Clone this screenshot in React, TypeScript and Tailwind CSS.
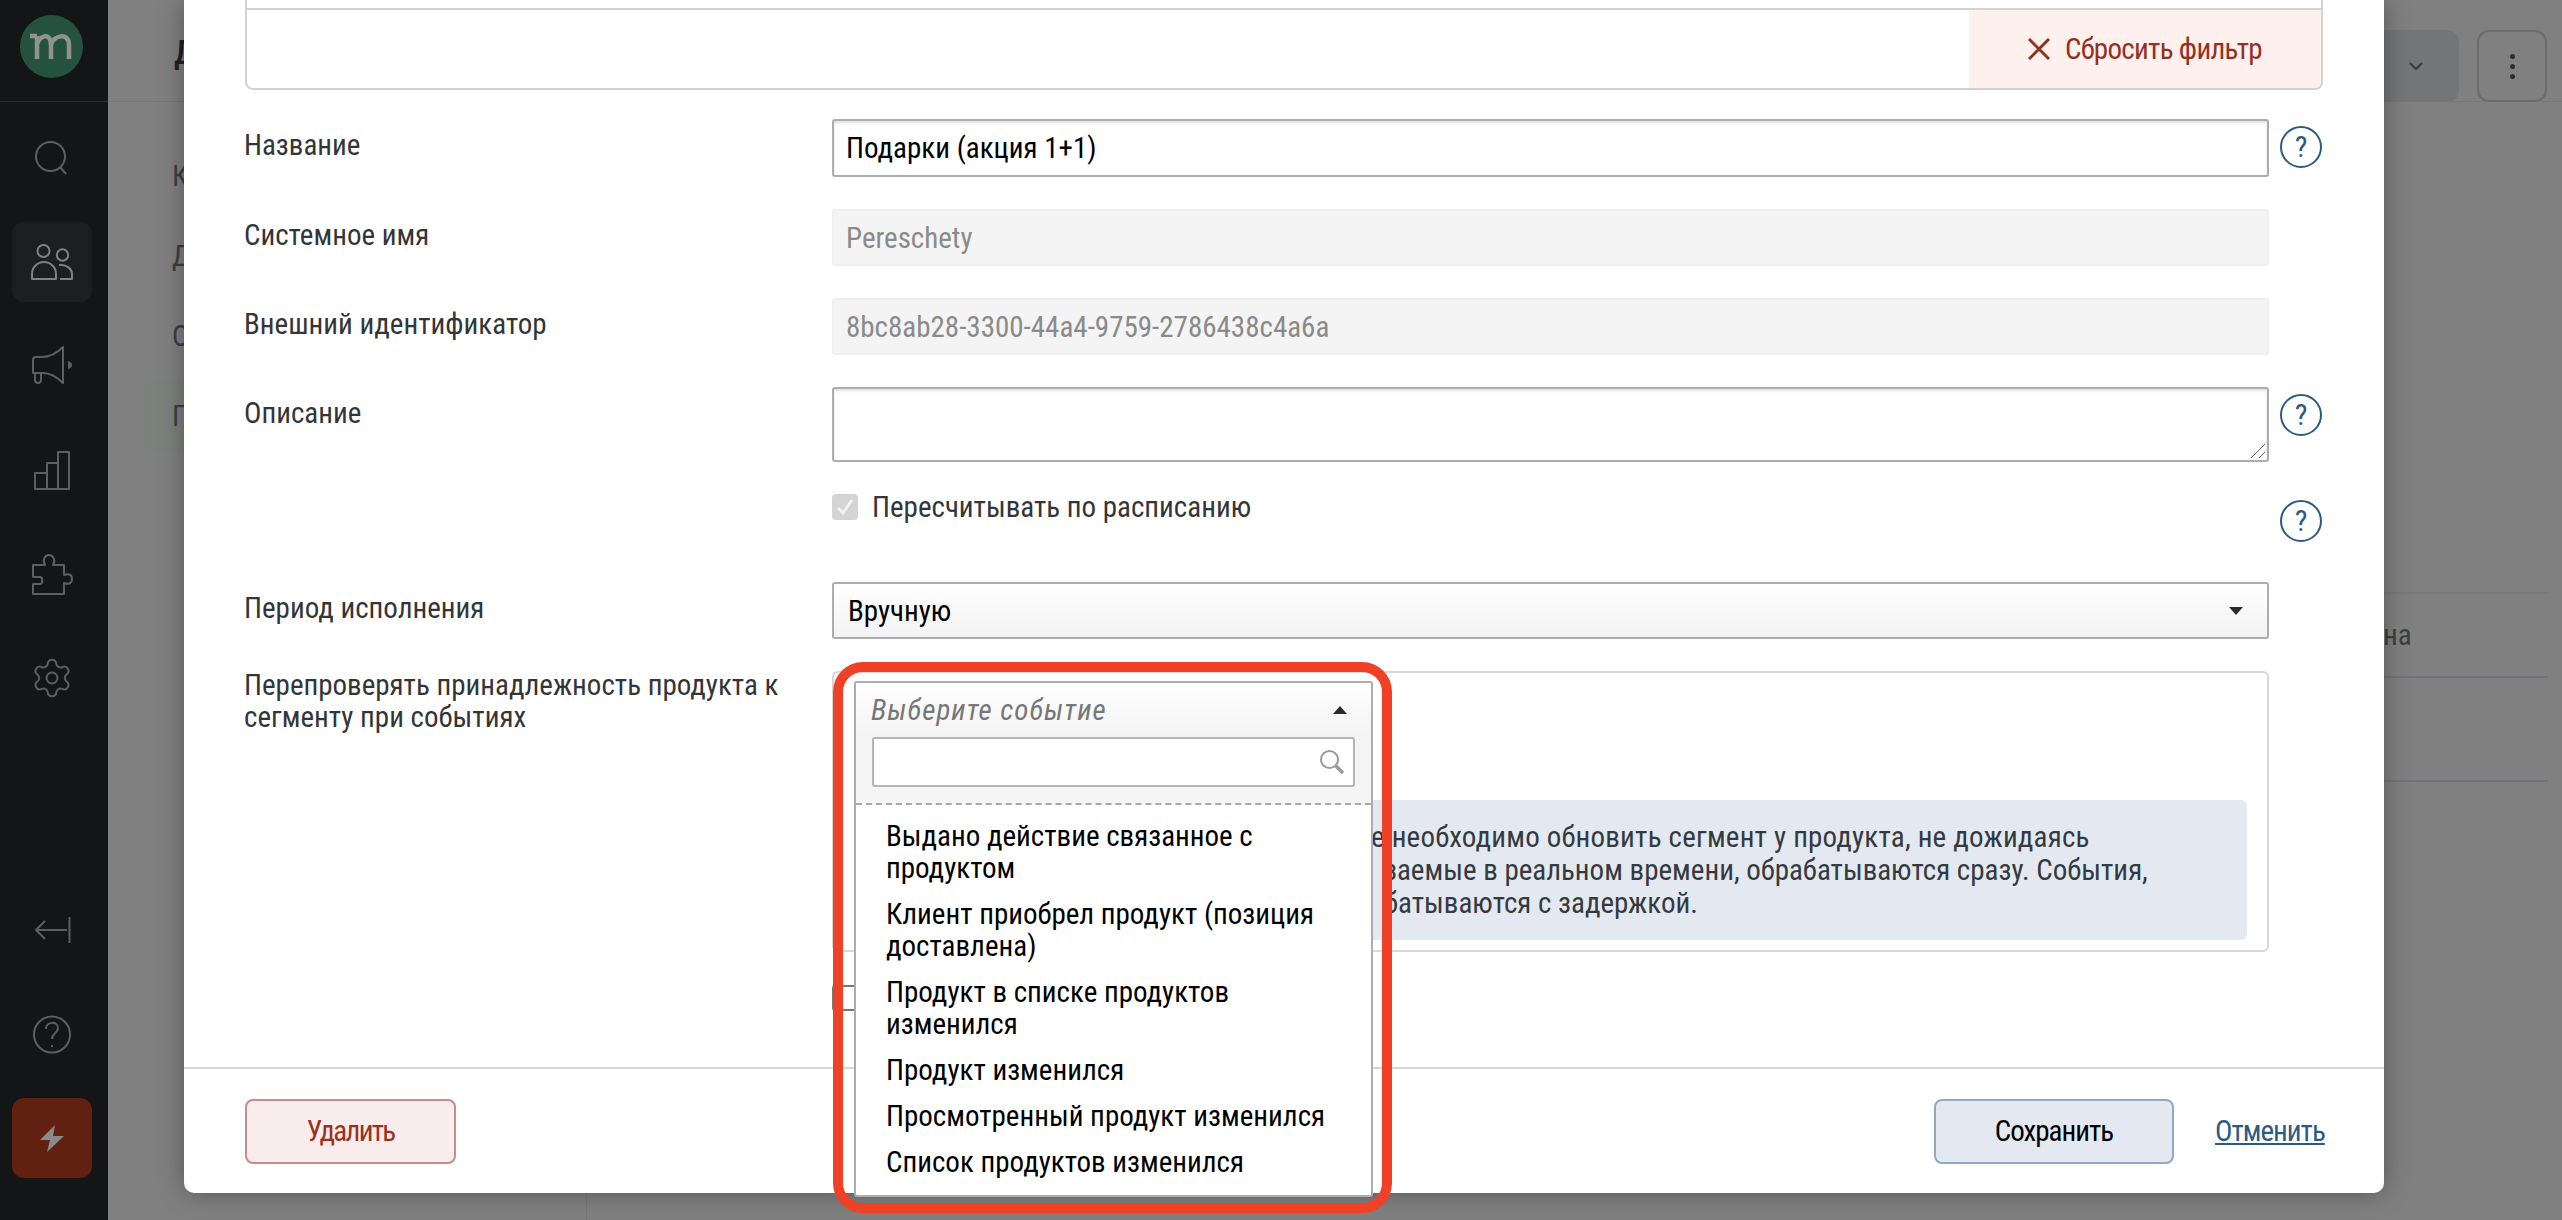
import { Settings } from "lucide-react";

const ico = "fill-none stroke-current stroke-[2]";

function Help() {
  return (
    <div className="flex h-[42px] w-[42px] shrink-0 items-center justify-center rounded-full border-2 border-[#2d5a85] text-[30px] leading-none text-[#2d5a85]">?</div>
  );
}

function Row({ label, children, help, helpClass }: { label: string; children: React.ReactNode; help?: boolean; helpClass?: string }) {
  return (
    <div className="flex items-start">
      <div className="-ml-[1px] w-[588px] shrink-0 pt-[10px] text-[#333538]">{label}</div>
      <div className="w-[1437px] shrink-0">{children}</div>
      {help && <div className={`ml-[11px] ${helpClass}`}><Help /></div>}
    </div>
  );
}

function NavIcon({ children, active }: { children: React.ReactNode; active?: boolean }) {
  return (
    <div className={`flex h-[80px] w-[80px] items-center justify-center rounded-[12px] ${active ? "bg-[#1c1e21] text-[#7f8183]" : "text-[#5c5e60]"}`}>
      {children}
    </div>
  );
}

const events = [
  "Выдано действие связанное с продуктом",
  "Клиент приобрел продукт (позиция доставлена)",
  "Продукт в списке продуктов изменился",
  "Продукт изменился",
  "Просмотренный продукт изменился",
  "Список продуктов изменился",
];

export default function App() {
  return (
    <div className="relative flex h-[1220px] w-[2562px] overflow-hidden bg-[#808080] font-['Roboto_Condensed','Roboto',sans-serif] text-[29px] leading-[32px]">
      {/* Sidebar */}
      <aside className="flex w-[108px] shrink-0 flex-col items-center bg-[#131517] pb-[42px] pr-[4px]">
        <div className="-mr-[4px] flex h-[102px] w-[108px] shrink-0 items-center justify-center border-b border-[#2a2d30] pb-[9px] pr-[6px]">
          <svg width="63" height="63" viewBox="0 0 63 63">
            <circle cx="31.5" cy="31.5" r="31.5" fill="#24523f" />
            <path d="M10 21h7M17 44V21M17 30C18 21 31 16 31 30V44M31 30C32 21 49 16 49 30V44" fill="none" stroke="#8f9492" strokeWidth="4.5" />
          </svg>
        </div>
        <div className="mt-[16px] flex flex-col gap-[24px]">
          <NavIcon>
            <svg width="34" height="34" viewBox="0 0 34 34" className={ico}><circle cx="15.5" cy="15.5" r="14.5" /><path d="M25 26l6 7" /></svg>
          </NavIcon>
          <NavIcon active>
            <svg width="43" height="37" viewBox="0 0 43 37" className={ico}><circle cx="12.5" cy="7" r="6" /><circle cx="31.5" cy="11" r="5.7" /><path d="M1 35v-5a12 12 0 0 1 24 0v5z" strokeLinejoin="round" /><path d="M28 21h2a11 9 0 0 1 11 9v5H29" strokeLinejoin="round" /></svg>
          </NavIcon>
          <NavIcon>
            <svg width="42" height="40" viewBox="0 0 42 40" className={ico}><path d="M2 27V14a3 3 0 0 1 3-3h6c8 0 15-4 21-10v36c-6-6-12-10-20-10z" strokeLinejoin="round" /><path d="M4 27v7a3 3 0 0 0 6 0v-7" /><path d="M37 15c3 1 4 2 4 4s-1 3-4 4z" fill="currentColor" stroke="none" /></svg>
          </NavIcon>
          <NavIcon>
            <svg width="38" height="40" viewBox="0 0 38 40" className={ico}><path d="M2 39V23h12v16zM14 39V13h11v26zM25 39V2h11v37z" strokeLinejoin="round" /></svg>
          </NavIcon>
          <NavIcon>
            <svg width="42" height="43" viewBox="0 0 42 43" className={ico}><path d="M2 12h12c-3-5 0-10 4-10s7 5 4 10h11v10c5-2 8 0 8 4s-3 6-8 4v11H2V31h7c3 0 3-7 0-7H2z" strokeLinejoin="round" /></svg>
          </NavIcon>
          <NavIcon>
            <Settings size={44} strokeWidth={1.1} />
          </NavIcon>
        </div>
        <div className="mt-auto flex flex-col gap-[24px]">
          <NavIcon>
            <svg width="37" height="28" viewBox="0 0 37 28" className={ico}><path d="M35.5 1v26M33 14H2M11 5l-9 9 9 9" /></svg>
          </NavIcon>
          <NavIcon>
            <svg width="38" height="39" viewBox="0 0 38 39" className={ico}><circle cx="19" cy="19.5" r="18" /><path d="M13 14c0-8 12-8 12-1 0 5-6 5-6 11" /><path d="M19 30v2" /></svg>
          </NavIcon>
          <div className="flex h-[80px] w-[80px] items-center justify-center rounded-[12px] bg-[#622010]">
            <svg width="24" height="27" viewBox="0 0 24 27"><path d="M15 0L0 15h10L7 27l17-16H13z" fill="#8a8a8a" /></svg>
          </div>
        </div>
      </aside>

      {/* Page behind the dialog */}
      <main className="flex min-w-0 flex-1 flex-col">
        <div className="flex h-[102px] shrink-0 items-start justify-between border-b border-[#75787c] pl-[66px] pr-[15px] pt-[30px]">
          <div className="pt-[6px] text-[34px] font-medium text-[#222]">Д</div>
          <div className="flex gap-[18px]">
            <div className="flex h-[72px] w-[200px] items-center justify-end rounded-[12px] bg-[#747577] pr-[36px] text-[#3a3c3e]">
              <svg width="14" height="9" viewBox="0 0 14 9" className={ico}><path d="M1 1l6 6 6-6" /></svg>
            </div>
            <div className="flex h-[72px] w-[70px] flex-col items-center justify-center gap-[5px] rounded-[12px] border-2 border-[#686c70]">
              <span className="h-[5px] w-[5px] rounded-full bg-[#2c2e30]" />
              <span className="h-[5px] w-[5px] rounded-full bg-[#2c2e30]" />
              <span className="h-[5px] w-[5px] rounded-full bg-[#2c2e30]" />
            </div>
          </div>
        </div>
        <div className="flex min-h-0 flex-1">
          <nav className="flex w-[479px] shrink-0 flex-col border-r border-[#75787c] pl-[36px] pt-[58px] text-[#3c3e40]">
            <div className="h-[80px] pl-[28px]">К</div>
            <div className="h-[80px] pl-[28px]">Д</div>
            <div className="h-[60px] pl-[28px]">О</div>
            <div className="flex h-[72px] items-center rounded-[10px] bg-[#7b817d] pl-[28px]">П</div>
          </nav>
          <div className="flex flex-1 flex-col items-end pr-[14px] pt-[490px] text-[#3c3e40]">
            <div className="h-[84px] w-[165px] border-t-2 border-[#75787c] pt-[25px]">на</div>
            <div className="h-[106px] w-[165px] border-y-2 border-[#6f7278]" />
          </div>
        </div>
      </main>

      {/* Dialog */}
      <div className="absolute left-[184px] top-0 flex h-[1193px] w-[2200px] flex-col rounded-b-[10px] bg-white shadow-[0_0_24px_rgba(0,0,0,0.35)]">
        <div className="flex-1 px-[61px]">
          <div className="-mt-[20px] h-[110px] w-[2078px] overflow-hidden rounded-b-[8px] border-2 border-[#d2d2d2]">
            <div className="h-[28px] border-b-2 border-[#d2d2d2]" />
            <div className="flex h-[78px] justify-end">
              <div className="flex h-full w-[352px] items-center justify-center gap-[15px] bg-[#fdf0ed] tracking-[-0.7px] text-[#93301f]">
                <svg width="22" height="22" viewBox="0 0 22 22" className="fill-none stroke-current stroke-[3]"><path d="M1 1l20 20M21 1L1 21" /></svg>
                <span>Сбросить фильтр</span>
              </div>
            </div>
          </div>

          <div className="mt-[29px] flex flex-col gap-[32px]">
            <Row label="Название" help helpClass="mt-[7px]">
              <div className="flex h-[58px] items-center rounded-[3px] border-2 border-[#adadb0] px-[12px] text-black shadow-[inset_0_2px_3px_rgba(0,0,0,0.12)]">Подарки (акция 1+1)</div>
            </Row>
            <Row label="Системное имя">
              <div className="flex h-[57px] items-center rounded-[3px] border-2 border-[#efefef] bg-[#f4f4f4] px-[12px] text-[#8a8a8a]">Pereschety</div>
            </Row>
            <Row label="Внешний идентификатор">
              <div className="flex h-[57px] items-center rounded-[3px] border-2 border-[#efefef] bg-[#f4f4f4] px-[12px] text-[#8a8a8a]">8bc8ab28-3300-44a4-9759-2786438c4a6a</div>
            </Row>
            <Row label="Описание" help helpClass="mt-[7px]">
              <div className="relative h-[75px] rounded-[3px] border-2 border-[#adadb0] shadow-[inset_0_2px_3px_rgba(0,0,0,0.12)]">
                <svg width="16" height="16" viewBox="0 0 16 16" className="absolute bottom-[1px] right-[1px] fill-none stroke-[#666] stroke-[1]"><path d="M1 15L15 1M9 15l6-6" /></svg>
              </div>
            </Row>
            <Row label="" help helpClass="mt-[6px]">
              <div className="flex h-[26px] items-center gap-[14px] text-[#333538]">
                <span className="flex h-[26px] w-[26px] items-center justify-center rounded-[4px] bg-[#d4d4d4]">
                  <svg width="18" height="18" viewBox="0 0 18 18" className="fill-none stroke-[#f2f2f2] stroke-[3]"><path d="M2 10l5 5 9-13" /></svg>
                </span>
                <span>Пересчитывать по расписанию</span>
              </div>
            </Row>
            <div className="mt-[8px]">
              <Row label="Период исполнения">
                <div className="flex h-[57px] items-center justify-between rounded-[3px] border-2 border-[#adadb0] bg-gradient-to-b from-white to-[#f3f3f3] pl-[14px] pr-[24px] text-black">
                  <span>Вручную</span>
                  <span className="h-0 w-0 border-x-[7px] border-t-[8px] border-x-transparent border-t-[#2b2b2b]" />
                </div>
              </Row>
            </div>
            <div className="relative">
              <Row label="">
                <div className="flex h-[281px] flex-col justify-end rounded-[6px] border-2 border-[#d8d8d8] px-[20px] pb-[10px]">
                  <div className="flex h-[140px] flex-col justify-center rounded-[6px] bg-[#e4e8f0] pl-[28px] leading-[33px] text-[#333a40]">
                    <div className="whitespace-nowrap pl-[489px] tracking-[0.2px]">е необходимо обновить сегмент у продукта, не дожидаясь</div>
                    <div className="whitespace-nowrap pl-[502px]">заемые в реальном времени, обрабатываются сразу. События,</div>
                    <div className="whitespace-nowrap pl-[502px]">батываются с задержкой.</div>
                  </div>
                </div>
                <div className="mt-[33px] h-[26px] w-[26px] rounded-[3px] border-2 border-[#777]" />
              </Row>
              <div className="absolute -left-[1px] top-[-2px] w-[560px] text-[#333538]">Перепроверять принадлежность продукта к сегменту при событиях</div>
            </div>
          </div>
        </div>

        <div className="flex h-[126px] shrink-0 items-center justify-between border-t-2 border-[#d6d6d6] px-[61px]">
          <button className="h-[65px] w-[211px] rounded-[8px] border-2 border-[#c98a8a] bg-[#f9ecec] tracking-[-1.7px] text-[#9c3020]">Удалить</button>
          <div className="flex items-center gap-[41px]">
            <button className="h-[65px] w-[240px] rounded-[8px] border-2 border-[#8eaac4] bg-[#e4e8f0] tracking-[-1px] text-black">Сохранить</button>
            <a className="w-[108px] whitespace-nowrap tracking-[-1px] text-[#2d5a85] underline">Отменить</a>
          </div>
        </div>
      </div>

      {/* Open event dropdown */}
      <div className="absolute left-[854px] top-[681px] flex h-[516px] w-[519px] flex-col rounded-[3px] border-2 border-[#adadb0] bg-white">
        <div className="flex h-[54px] shrink-0 items-center justify-between bg-gradient-to-b from-white to-[#f3f3f3] pl-[15px] pr-[24px]">
          <span className="italic tracking-[1px] text-[#777]">Выберите событие</span>
          <span className="h-0 w-0 border-x-[7px] border-b-[8px] border-x-transparent border-b-[#2b2b2b]" />
        </div>
        <div className="h-[68px] shrink-0 border-b-2 border-dashed border-[#a8a8a8] bg-[#f5f5f5] px-[16px]">
          <div className="flex h-[50px] items-center justify-end rounded-[3px] border-2 border-[#b5b5b8] bg-white pr-[8px]">
            <svg width="26" height="26" viewBox="0 0 26 26" className="fill-none stroke-[#9a9a9a] stroke-[2]"><circle cx="10.5" cy="10.5" r="8.5" /><path d="M17 17l7 7" strokeWidth="3.5" /></svg>
          </div>
        </div>
        <div className="flex flex-col gap-[14px] pb-[16px] pl-[30px] pr-[16px] pt-[15px] text-black">
          {events.map((e) => (
            <div key={e}>{e}</div>
          ))}
        </div>
      </div>

      {/* Annotation frame */}
      <div className="pointer-events-none absolute left-[833px] top-[662px] h-[551px] w-[559px] rounded-[30px] border-[10px] border-[#ee4125]" />
    </div>
  );
}
